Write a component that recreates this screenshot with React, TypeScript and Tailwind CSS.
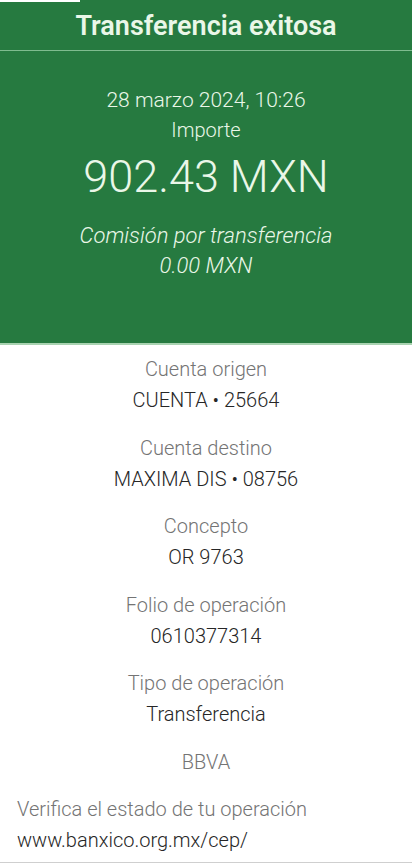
const rows = [
  { label: "Cuenta origen", value: "CUENTA • 25664" },
  { label: "Cuenta destino", value: "MAXIMA DIS • 08756" },
  { label: "Concepto", value: "OR 9763" },
  { label: "Folio de operación", value: "0610377314" },
  { label: "Tipo de operación", value: "Transferencia" },
];

const App = () => {
  return (
    <div className="w-[412px] h-[863px] overflow-hidden bg-white font-['Roboto',sans-serif]">
      <div className="relative bg-[#267a40] text-[#eaf7e8]">
        <div className="absolute left-0 top-0 h-[2px] w-[80px] bg-white" />
        <div className="flex h-[51px] items-center justify-center border-b border-[#7fbc8f]">
          <h1 className="pt-[2px] text-[27px] font-semibold">Transferencia exitosa</h1>
        </div>
        <div className="flex h-[292px] flex-col items-center pt-[34px] font-light">
          <span className="text-[21px] leading-[30px]">28 marzo 2024, 10:26</span>
          <span className="text-[20px] leading-[30px]">Importe</span>
          <span className="mt-[7px] text-[45px] leading-[50px]">902.43 MXN</span>
          <span className="mt-[19px] text-[22px] italic leading-[30px]">Comisión por transferencia</span>
          <span className="text-[22px] italic leading-[30px]">0.00 MXN</span>
        </div>
        <div className="h-[2px] bg-[#a9d3b1]" />
      </div>
      <div className="flex flex-col items-center pt-[9px] text-[20px] leading-[31px] font-light">
        {rows.map((row) => (
          <div key={row.label} className="mb-[16.5px] flex flex-col items-center">
            <span className="text-[#747474]">{row.label}</span>
            <span className="text-[#262626]">{row.value}</span>
          </div>
        ))}
        <span className="mt-[0.5px] text-[#747474]">BBVA</span>
      </div>
      <div className="flex flex-col px-[17px] pt-[16px] pb-[6px] text-[20px] leading-[31px] font-light">
        <span className="text-[#747474]">Verifica el estado de tu operación</span>
        <span className="text-[#262626]">www.banxico.org.mx/cep/</span>
      </div>
      <div className="h-px bg-[#cfcfcf]" />
    </div>
  );
};

export default App;
